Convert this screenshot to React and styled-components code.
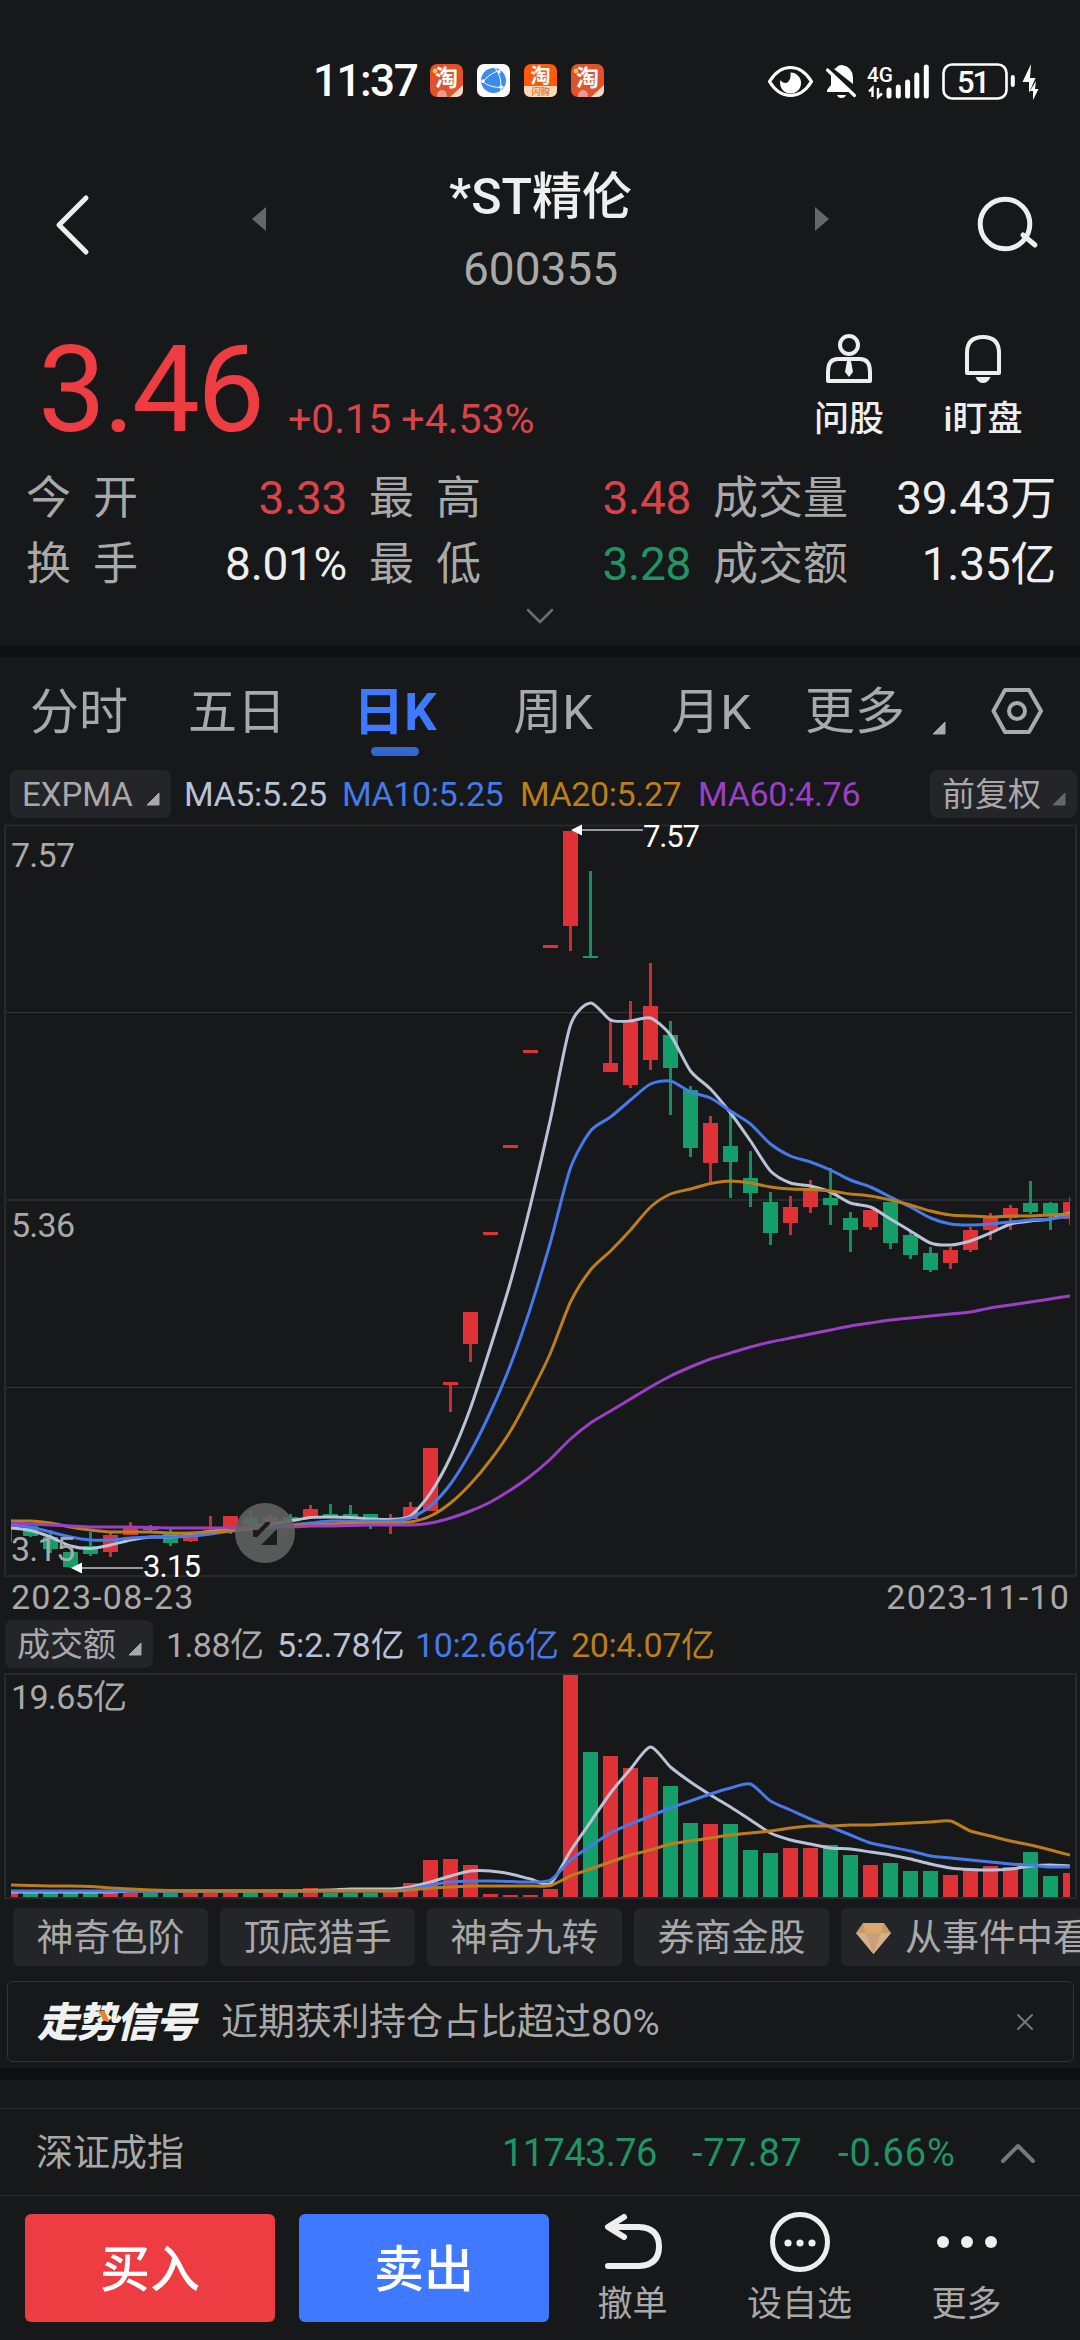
import React from 'react';
import styled, { createGlobalStyle } from 'styled-components';

const RED = '#e03236';
const GREEN = '#149f6a';
const WHITE_LINE = '#b9c2d6';
const BLUE_LINE = '#467aea';
const ORANGE_LINE = '#bb7e1a';
const PURPLE_LINE = '#9d3fc6';

// [color, high, low, bodyTop, bodyBottom], one candle every 20px
const candles = [
  ['r', 1519, 1542, 1526, 1527],
  ['g', 1526, 1537, 1526, 1536],
  ['g', 1530, 1553, 1537, 1549],
  ['g', 1552, 1568, 1552, 1567],
  ['g', 1532, 1556, 1546, 1554],
  ['r', 1533, 1557, 1535, 1552],
  ['r', 1522, 1535, 1527, 1535],
  ['g', 1525, 1531, 1528, 1530],
  ['g', 1529, 1546, 1534, 1543],
  ['r', 1533, 1542, 1535, 1541],
  ['r', 1516, 1532, 1530, 1532],
  ['r', 1516, 1534, 1516, 1531],
  ['g', 1510, 1525, 1517, 1525],
  ['r', 1514, 1522, 1517, 1522],
  ['g', 1514, 1521, 1517, 1520],
  ['r', 1505, 1518, 1509, 1517],
  ['g', 1504, 1517, 1514, 1517],
  ['g', 1505, 1517, 1514, 1517],
  ['g', 1514, 1529, 1514, 1519],
  ['r', 1514, 1534, 1524, 1526],
  ['r', 1502, 1519, 1507, 1519],
  ['r', 1448, 1511, 1448, 1511],
  ['r', 1382, 1412, 1382, 1385],
  ['r', 1312, 1362, 1312, 1344],
  ['r', 1232, 1235, 1232, 1235],
  ['r', 1145, 1148, 1145, 1148],
  ['r', 1050, 1053, 1050, 1053],
  ['r', 945, 948, 945, 948],
  ['r', 831, 951, 831, 926],
  ['g', 871, 957, 956, 958],
  ['r', 1018, 1072, 1063, 1072],
  ['r', 1001, 1088, 1022, 1085],
  ['r', 963, 1070, 1006, 1060],
  ['g', 1021, 1115, 1035, 1068],
  ['g', 1086, 1157, 1090, 1148],
  ['r', 1116, 1183, 1123, 1163],
  ['g', 1113, 1198, 1146, 1162],
  ['g', 1151, 1207, 1178, 1193],
  ['g', 1192, 1245, 1202, 1233],
  ['r', 1196, 1235, 1207, 1223],
  ['r', 1180, 1213, 1189, 1207],
  ['g', 1168, 1225, 1198, 1205],
  ['g', 1212, 1252, 1218, 1230],
  ['r', 1210, 1230, 1210, 1227],
  ['g', 1202, 1249, 1202, 1243],
  ['g', 1230, 1259, 1235, 1255],
  ['g', 1247, 1272, 1253, 1270],
  ['r', 1247, 1269, 1250, 1263],
  ['r', 1227, 1252, 1230, 1250],
  ['r', 1213, 1240, 1217, 1230],
  ['r', 1205, 1230, 1208, 1218],
  ['g', 1181, 1214, 1203, 1212],
  ['g', 1202, 1230, 1203, 1214],
  ['r', 1197, 1225, 1202, 1219],
];

const ma5 = [1528, 1530.5, 1537, 1546, 1548.5, 1545, 1540, 1537, 1537, 1535, 1531.5, 1529, 1527, 1524, 1521, 1517.5, 1517, 1517.5, 1519, 1519.5, 1516, 1493, 1457, 1408, 1347, 1282, 1205, 1119, 1025, 1003, 1020, 1021, 1018, 1035, 1071, 1089, 1113, 1141, 1171, 1183, 1186, 1192, 1203, 1207, 1219, 1231, 1243, 1245, 1241, 1233, 1224, 1221, 1219, 1213];
const ma10 = [1525, 1527, 1532, 1537, 1540, 1540, 1538, 1537, 1537, 1536, 1534, 1531, 1529, 1527, 1525, 1523, 1521, 1521, 1521, 1521, 1518, 1506, 1484, 1452, 1412, 1365, 1308, 1242, 1168, 1131, 1117, 1100, 1084, 1081, 1092, 1098, 1111, 1124, 1144, 1156, 1162, 1170, 1180, 1187, 1197, 1207, 1218, 1224, 1225, 1224, 1222, 1220, 1219, 1216];
const ma20 = [1521, 1521, 1523, 1527, 1530, 1532, 1532, 1532, 1533, 1533, 1532, 1531, 1529, 1527, 1526, 1525, 1524, 1523, 1523, 1523, 1522, 1516, 1503, 1484, 1460, 1431, 1394, 1353, 1302, 1270, 1251, 1230, 1207, 1194, 1189, 1183.5, 1181, 1183, 1187, 1189, 1189.5, 1191, 1194, 1196, 1200, 1205, 1211, 1215, 1216, 1217, 1216, 1216, 1215, 1214];
const ma60 = [1523, 1524, 1525, 1526, 1527, 1527, 1527, 1527.5, 1528, 1528, 1528, 1528, 1527, 1527, 1527, 1526, 1526, 1525.5, 1525, 1525, 1525, 1523, 1518, 1511, 1502, 1490, 1476, 1459, 1439, 1423, 1411, 1399, 1387, 1376, 1367, 1359, 1353, 1347, 1342, 1338, 1334, 1330, 1326, 1323, 1320, 1318, 1316, 1314, 1312, 1308, 1305, 1302, 1299, 1296];

const volumeTops = [1893, 1893, 1893, 1893, 1893, 1893, 1893, 1893, 1893, 1893, 1893, 1893, 1893, 1893, 1892, 1888, 1893, 1893, 1893, 1892, 1883, 1860, 1859, 1865, 1894, 1895, 1895, 1889, 1675, 1752, 1756, 1768, 1777, 1786, 1823, 1824, 1824, 1850, 1853, 1848, 1848, 1845, 1855, 1865, 1863, 1871, 1871, 1875, 1869, 1866, 1867, 1852, 1876, 1873];
const vol5 = [1892, 1892, 1892, 1892, 1892, 1892, 1891, 1891, 1891, 1891, 1891, 1891, 1891, 1891, 1891, 1890.5, 1890, 1889, 1889, 1889, 1887, 1882, 1876, 1871, 1871, 1874, 1879, 1883.5, 1851, 1822, 1793, 1769, 1747, 1767, 1782, 1795, 1807, 1820, 1833, 1840, 1844, 1848, 1849, 1852, 1855, 1859, 1864, 1868, 1869.5, 1870, 1869, 1866, 1865, 1866];
const vol10 = [1891, 1891, 1891, 1891, 1891, 1891, 1891, 1891, 1891, 1891, 1891, 1891, 1891, 1891, 1891, 1891, 1891, 1891, 1891, 1891, 1889, 1885, 1882, 1881, 1881, 1881.5, 1882, 1880, 1860, 1846, 1833, 1824, 1816, 1808, 1801, 1794, 1788, 1784, 1801, 1810, 1819, 1827, 1835, 1843, 1847, 1851, 1856, 1858, 1860, 1862, 1864, 1865, 1867, 1867];
const vol20 = [1885, 1885.5, 1886, 1886, 1886.5, 1888, 1889, 1890, 1890.5, 1891, 1891, 1891, 1891, 1891, 1891, 1891, 1891, 1891, 1891, 1891, 1890, 1888, 1887, 1886, 1886, 1886, 1886, 1885.5, 1876, 1869, 1862, 1855, 1850, 1844, 1841, 1838, 1835, 1833, 1831, 1828, 1826, 1826, 1825, 1825, 1824, 1823, 1822, 1821, 1831, 1836, 1841, 1845, 1850, 1855];

const xAt = (i) => 10.5 + i * 20;

// cubic path through every point with light tension
const linePath = (values) => {
  const p = values.map((y, i) => [xAt(i), y]);
  let d = `M${p[0][0]},${p[0][1]}`;
  for (let i = 0; i < p.length - 1; i++) {
    const a = p[Math.max(i - 1, 0)];
    const b = p[i];
    const c = p[i + 1];
    const e = p[Math.min(i + 2, p.length - 1)];
    const c1y = b[1] + (c[1] - a[1]) / 8;
    const c2y = c[1] - (e[1] - b[1]) / 8;
    d += `C${b[0] + 5},${c1y} ${c[0] - 5},${c2y} ${c[0]},${c[1]}`;
  }
  return d;
};

const fillOf = (c) => (c === 'r' ? RED : GREEN);

const Lines = ({ series }) =>
  series.map(([values, color]) => (
    <path key={color} d={linePath(values)} fill="none" stroke={color} strokeWidth="3" strokeLinejoin="round" />
  ));

const PriceChart = () => (
  <svg width="1080" height="752" viewBox="0 825 1080 752" display="block">
    <defs>
      <clipPath id="plot"><rect x="11" y="800" width="1059" height="1100" /></clipPath>
    </defs>
    <path d="M5 825.5H1076V1576H5Z" fill="none" stroke="#27282b" strokeWidth="2" />
    <path d="M6 1012.5H1073M6 1387.5H1073" stroke="#333436" />
    <path d="M6 1200H1073" stroke="#29292b" strokeWidth="2" />
    <g clipPath="url(#plot)">
      {candles.map(([c, high, low, top, bottom], i) => (
        <g key={i} fill={fillOf(c)}>
          <rect x={xAt(i) - 1.5} y={high} width="3" height={low - high} opacity=".88" />
          <rect x={xAt(i) - 7.5} y={top} width="15" height={bottom - top} />
        </g>
      ))}
      <Lines series={[[ma5, WHITE_LINE], [ma10, BLUE_LINE], [ma20, ORANGE_LINE], [ma60, PURPLE_LINE]]} />
    </g>
    <circle cx="265" cy="1533" r="30" fill="#626262" opacity=".88" />
    <path d="M253 1530V1537H257L270 1524V1522H266L258 1530ZM277 1529V1545H261Z" fill="#1c1c1d" />
    <path d="M576 830H643M76 1568H143" stroke="#999" strokeWidth="2" />
    <path d="M571 830L582 824.5V835.5ZM71 1568L82 1562.5V1573.5Z" fill="#fff" />
    <ChartText x="643" y="847" textLength="57" $white>7.57</ChartText>
    <ChartText x="143" y="1577" textLength="58" $white>3.15</ChartText>
    <ChartText x="11" y="867" textLength="64">7.57</ChartText>
    <ChartText x="11" y="1237" textLength="64">5.36</ChartText>
    <ChartText x="11" y="1561" textLength="64">3.15</ChartText>
  </svg>
);

const VolumeChart = () => (
  <svg width="1080" height="226" viewBox="0 1673 1080 226" display="block">
    <path d="M5 1674H1076V1898H5Z" fill="none" stroke="#27282b" strokeWidth="2" />
    <g clipPath="url(#plot)">
      {volumeTops.map((top, i) => (
        <rect key={i} x={xAt(i) - 7.5} y={top} width="15" height={1897 - top} fill={fillOf(candles[i][0])} />
      ))}
      <Lines series={[[vol5, WHITE_LINE], [vol10, BLUE_LINE], [vol20, ORANGE_LINE]]} />
    </g>
    <ChartText x="11" y="1709" textLength="116">19.65亿</ChartText>
  </svg>
);

const TaobaoIcon = ({ sale }) => (
  <svg width="33" height="33" viewBox="0 0 33 33">
    <rect width="33" height="33" rx="7" fill={sale ? '#fd5a0c' : '#e2502c'} />
    {sale ? (
      <path d="M0 22H33V26Q33 33 26 33H7Q0 33 0 26Z" fill="#fbd9bd" />
    ) : (
      <>
        <path d="M20 33L33 21V26Q33 33 26 33Z" fill="#f4d9c8" />
        <circle cx="5" cy="7" r="2.4" fill="#f7c63c" />
        <path d="M7 33Q7 26 12 26T17 33Z" fill="#eb9b8b" />
      </>
    )}
    <IconText x="16.5" y={sale ? 19 : 21.5} fontSize={sale ? 20 : 23}>淘</IconText>
    {sale && <IconText x="16.5" y="31" fontSize="9" $color="#e8803a">闪购</IconText>}
  </svg>
);

const GlobeIcon = () => (
  <svg width="33" height="33" viewBox="0 0 33 33">
    <rect width="33" height="33" rx="7" fill="#fff" />
    <circle cx="16.5" cy="16.5" r="12.5" fill="#3b8cec" />
    <path d="M18 4Q25 12 24 27M24 6Q12 9 5 19M5 17Q14 25 27 23" fill="none" stroke="#fff" />
    <g fill="#fff">
      <circle cx="6" cy="17" r="1.7" />
      <circle cx="22" cy="8" r="1.6" />
      <circle cx="24" cy="23" r="1.8" />
    </g>
  </svg>
);

const StatusIcons = () => (
  <svg width="272" height="40" viewBox="767 60 272 40">
    <path d="M769.5 80.5Q778 66.5 790.5 66.5T811.5 80.5Q803 94.5 790.5 94.5T769.5 80.5Z" fill="none" stroke="#fff" strokeWidth="3.2" strokeLinejoin="round" />
    <path d="M790.5 71.5A10.5 10.5 0 1 1 780.5 79Q782 82 786 82Q791.5 80 790.5 71.5Z" fill="#fff" />
    <path d="M836 67Q838 64 842 64Q853 66 853 77V83L834 68ZM831 73L851 91H827V89L831 84ZM837 94H846Q845 97 841.5 97T837 94Z" fill="#fff" />
    <path d="M827.5 69L854.5 94.5" stroke="#fff" strokeWidth="3.2" strokeLinecap="round" />
    <text x="867" y="80.5" fontSize="20" fontWeight="500" fill="#fff" textLength="26" lengthAdjust="spacingAndGlyphs">4G</text>
    <path d="M872.5 96V87L869 90.5M878 87V96L882 92.5" fill="none" stroke="#fff" strokeWidth="2.4" />
    <path d="M889 89V95M898.3 86V95M907.6 81V95M916.8 74V95M926.3 66V95" stroke="#fff" strokeWidth="5" strokeLinecap="round" />
    <rect x="943.5" y="63.5" width="63" height="34" rx="8.5" fill="none" stroke="#fff" strokeWidth="2.6" />
    <text x="957" y="91.5" fontSize="31" fontWeight="500" fill="#fff" textLength="33">51</text>
    <path d="M1012.8 76V84" stroke="#fff" strokeWidth="4" strokeLinecap="round" />
    <path d="M1031 63L1022.5 81H1029V92L1035.5 77H1030ZM1036 80L1030 90H1033V99L1038.5 88H1035Z" fill="#fff" />
  </svg>
);

const SearchIcon = () => (
  <svg width="66" height="62" viewBox="975 195 66 62" fill="none" stroke="#eee" strokeWidth="5">
    <circle cx="1005" cy="225" r="24.8" />
    <path d="M1023 236L1035 246" strokeLinecap="round" />
  </svg>
);

const AdvisorIcon = () => (
  <svg width="48" height="50" viewBox="0 0 48 50" fill="none" stroke="#eee" strokeWidth="4">
    <circle cx="24" cy="11" r="9" />
    <path d="M3 47V38Q3 25 13 25H35Q45 25 45 38V47Z" strokeLinejoin="round" />
    <path d="M22 27H26L28 38L24 43L20 38Z" fill="#eee" stroke="none" />
  </svg>
);

const BellIcon = () => (
  <svg width="40" height="50" viewBox="0 0 40 50" fill="none" stroke="#eee" strokeWidth="4">
    <path d="M4 39V19Q4 3 20 3T36 19V39Z" strokeLinejoin="round" />
    <path d="M12.5 43H27.5Q25 49 20 49T12.5 43Z" fill="#eee" stroke="none" />
  </svg>
);

const Corner = ({ color = '#a9a9a9' }) => (
  <svg width="14" height="14" viewBox="0 0 14 14">
    <path d="M13 1V13H1Z" fill={color} stroke={color} strokeLinejoin="round" />
  </svg>
);

const SettingsIcon = () => (
  <svg width="52" height="48" viewBox="0 0 52 48" fill="none" stroke="#aaa" strokeWidth="4">
    <path d="M14 3H38L50 24L38 45H14L2.5 24Z" strokeLinejoin="round" />
    <circle cx="26" cy="24" r="8" />
  </svg>
);

const GemIcon = () => (
  <svg width="35" height="31" viewBox="0 0 35 31">
    <path d="M7 0H28L35 10L17.5 31L0 10Z" fill="#c49a6c" />
    <path d="M7 0H28L25 10H10Z" fill="#dba970" />
    <path d="M0 10H35L17.5 31Z" fill="#d4b08a" />
    <path d="M10 10H25L17.5 31Z" fill="#c9a078" />
  </svg>
);

const UndoIcon = () => (
  <svg width="60" height="56" viewBox="0 0 60 56" fill="none" stroke="#eee" strokeWidth="6" strokeLinecap="round" strokeLinejoin="round">
    <path d="M21 3L5 13L21 23M6 13H36Q56 14 56 32.5T36 52H5" />
  </svg>
);

const WatchIcon = () => (
  <svg width="60" height="60" viewBox="0 0 60 60">
    <circle cx="30" cy="30" r="27.5" fill="none" stroke="#eee" strokeWidth="5" />
    <g fill="#eee">
      <circle cx="18" cy="31" r="3.6" />
      <circle cx="30" cy="31" r="3.6" />
      <circle cx="42" cy="31" r="3.6" />
    </g>
  </svg>
);

const DotsIcon = () => (
  <svg width="60" height="56" viewBox="0 0 60 56" fill="#eee">
    <circle cx="6" cy="28" r="6" />
    <circle cx="30" cy="28" r="6" />
    <circle cx="54" cy="28" r="6" />
  </svg>
);

const Arrow = ({ d, width, height, color, stroke }) => (
  <svg width={width} height={height} fill="none" stroke={color} strokeWidth={stroke} strokeLinecap="round" strokeLinejoin="round">
    <path d={d} />
  </svg>
);

const stats = [
  ['今 开', '3.33', '#d9444a'],
  ['最 高', '3.48', '#d9444a'],
  ['成交量', '39.43万', '#eee'],
  ['换 手', '8.01%', '#eee'],
  ['最 低', '3.28', '#229464'],
  ['成交额', '1.35亿', '#eee'],
];

const tabs = ['分时', '五日', '日K', '周K', '月K'];
const chips = ['神奇色阶', '顶底猎手', '神奇九转', '券商金股'];

const App = () => (
  <Page>
    <GlobalStyle />
    <StatusBar>
      <Clock>11:37</Clock>
      <AppIcons>
        <TaobaoIcon />
        <GlobeIcon />
        <TaobaoIcon sale />
        <TaobaoIcon />
      </AppIcons>
      <StatusIcons />
    </StatusBar>

    <Header>
      <Arrow d="M31 4L4 31L31 58" width={35} height={62} color="#eee" stroke={5} />
      <Triangle />
      <Title>
        <StockName>*ST精伦</StockName>
        <StockCode>600355</StockCode>
      </Title>
      <Triangle $right />
      <SearchIcon />
    </Header>

    <PriceRow>
      <Price>3.46</Price>
      <Change>+0.15 +4.53%</Change>
      <QuickAction><AdvisorIcon />问股</QuickAction>
      <QuickAction><BellIcon />i盯盘</QuickAction>
    </PriceRow>

    <Stats>
      {stats.map(([label, value, color]) => (
        <Stat key={label}>
          <StatLabel>{label.split(' ').map((part) => <span key={part}>{part}</span>)}</StatLabel>
          <StatValue $color={color}>{value}</StatValue>
        </Stat>
      ))}
    </Stats>
    <Expand>
      <Arrow d="M2 2L14 14L26 2" width={28} height={17} color="#6e6e6e" stroke={2.5} />
    </Expand>
    <Band />

    <Tabs>
      {tabs.map((tab) => <Tab key={tab} $active={tab === '日K'}>{tab}</Tab>)}
      <MoreTab>更多<Corner /></MoreTab>
      <SettingsIcon />
    </Tabs>

    <IndicatorRow $height="60px" $bottom="3px">
      <Pill $left="10px" $width="161px">EXPMA<Corner /></Pill>
      <Legend $left="13px" $width="158px" $color={WHITE_LINE} $spacing="-0.4px">MA5:5.25</Legend>
      <Legend $width="178px" $color={BLUE_LINE} $spacing="-0.4px">MA10:5.25</Legend>
      <Legend $width="178px" $color={ORANGE_LINE} $spacing="-0.4px">MA20:5.27</Legend>
      <Legend $width="232px" $color={PURPLE_LINE} $spacing="-0.3px">MA60:4.76</Legend>
      <Pill $width="147px">前复权<Corner color="#666" /></Pill>
    </IndicatorRow>
    <PriceChart />
    <Dates><span>2023-08-23</span><span>2023-11-10</span></Dates>

    <IndicatorRow $height="55px" $bottom="4px">
      <Pill $left="5px" $width="148px">成交额<Corner /></Pill>
      <Legend $left="13px" $width="111px" $color="#a9a9a9" $spacing="-0.6px" $top="3px">1.88亿</Legend>
      <Legend $width="138px" $color={WHITE_LINE} $top="3px">5:2.78亿</Legend>
      <Legend $width="156px" $color={BLUE_LINE} $spacing="-0.4px" $top="3px">10:2.66亿</Legend>
      <Legend $width="150px" $color={ORANGE_LINE} $spacing="-0.4px" $top="3px">20:4.07亿</Legend>
    </IndicatorRow>
    <VolumeChart />

    <Chips>
      {chips.map((chip) => <Chip key={chip}>{chip}</Chip>)}
      <Chip $wide><GemIcon />从事件中看</Chip>
    </Chips>

    <Signal>
      <SignalLogo>走势信号</SignalLogo>
      <SignalText>近期获利持仓占比超过80%</SignalText>
      <Arrow d="M2 2L16 16M16 2L2 16" width={18} height={18} color="#777" stroke={2} />
    </Signal>
    <Band />

    <IndexRow>
      <IndexName>深证成指</IndexName>
      <IndexValue $width="190px" $spacing="-0.6px">11743.76</IndexValue>
      <IndexValue $width="146px" $spacing="0.8px">-77.87</IndexValue>
      <IndexValue $width="162px" $spacing="0.9px">-0.66%</IndexValue>
      <Arrow d="M3 19L18 4L33 19" width={36} height={23} color="#777" stroke={4} />
    </IndexRow>

    <Footer>
      <TradeButton $color="#ed3d42">买入</TradeButton>
      <TradeButton $color="#3f79ff">卖出</TradeButton>
      <FooterAction><UndoIcon />撤单</FooterAction>
      <FooterAction><WatchIcon />设自选</FooterAction>
      <FooterAction><DotsIcon />更多</FooterAction>
    </Footer>
  </Page>
);

export default App;

// Styled components

const GlobalStyle = createGlobalStyle`
  body {
    margin: 0;
    background: #17181a;
  }
`;

const Page = styled.div`
  width: 1080px;
  height: 2340px;
  overflow: hidden;
  background: #17181a;
  color: #a9a9a9;
  font-family: Roboto, 'Noto Sans CJK SC', sans-serif;
  line-height: 1;
  white-space: nowrap;

  svg {
    flex-shrink: 0;
    overflow: visible;
  }
`;

const ChartText = styled.text`
  font-size: ${(props) => (props.$white ? 31 : 34)}px;
  fill: ${(props) => (props.$white ? '#fff' : '#a9a9a9')};
`;

const IconText = styled.text`
  fill: ${(props) => props.$color || '#fff'};
  font-family: 'Noto Sans CJK SC', sans-serif;
  font-weight: 700;
  text-anchor: middle;
`;

const StatusBar = styled.div`
  display: flex;
  align-items: center;
  box-sizing: border-box;
  height: 130px;
  padding: 31px 41px 0 313px;
`;

const Clock = styled.div`
  width: 117px;
  font-size: 44px;
  font-weight: 500;
  letter-spacing: -1.5px;
  color: #fff;
`;

const AppIcons = styled.div`
  display: flex;
  gap: 14px;
  flex: 1;
`;

const Header = styled.div`
  display: flex;
  align-items: center;
  box-sizing: border-box;
  height: 190px;
  padding: 0 39px 0 55px;
`;

const Triangle = styled.div`
  width: 0;
  height: 0;
  margin: ${(props) => (props.$right ? '0 146px 12px 0' : '0 0 12px 162px')};
  border: 12px solid transparent;
  border-${(props) => (props.$right ? 'right' : 'left')}-width: 0;
  border-${(props) => (props.$right ? 'left' : 'right')}: 14px solid #666;
`;

const Title = styled.div`
  display: flex;
  flex-direction: column;
  align-items: center;
  flex: 1;
  gap: 24px;
  padding-top: 13px;
`;

const StockName = styled.div`
  color: #eee;
  font-size: 50px;
  font-weight: 500;
`;

const StockCode = styled.div`
  font-size: 46px;
`;

const PriceRow = styled.div`
  display: flex;
  align-items: flex-end;
  box-sizing: border-box;
  height: 140px;
  padding: 0 51px 20px 38px;
`;

const Price = styled.div`
  width: 250px;
  margin-bottom: -11px;
  color: #ed3d42;
  font-size: 121px;
  letter-spacing: -3px;
`;

const Change = styled.div`
  flex: 1;
  color: #d9444a;
  font-size: 41px;
`;

const QuickAction = styled.div`
  display: flex;
  flex-direction: column;
  align-items: center;
  gap: 18px;
  width: 92px;
  margin: 0 0 3px 42px;
  color: #eee;
  font-size: 35px;
  font-weight: 500;
`;

const Stats = styled.div`
  display: grid;
  grid-template-columns: 321px 322px 343px;
  column-gap: 22px;
  padding: 5px 24px 0 26px;
`;

const Stat = styled.div`
  display: flex;
  align-items: center;
  justify-content: space-between;
  height: 66px;
`;

const StatLabel = styled.div`
  display: flex;
  justify-content: space-between;
  min-width: 112px;
  font-size: 45px;
`;

const StatValue = styled.div`
  color: ${(props) => props.$color};
  font-size: 46px;
  letter-spacing: -0.3px;
`;

const Expand = styled.div`
  display: flex;
  justify-content: center;
  height: 37px;
  padding-top: 11px;
`;

const Band = styled.div`
  height: 12px;
  background: #0f1012;
`;

const Tabs = styled.div`
  display: flex;
  align-items: center;
  box-sizing: border-box;
  height: 108px;
  padding-right: 37px;
  font-size: 49px;
`;

const Tab = styled.div`
  display: flex;
  flex-direction: column;
  align-items: center;
  justify-content: center;
  width: 158px;
  height: 108px;
  padding-top: 2px;
  box-sizing: border-box;
  color: ${(props) => (props.$active ? '#3f79ff' : 'inherit')};
  font-size: ${(props) => (props.$active ? 51 : 49)}px;
  font-weight: ${(props) => (props.$active ? 700 : 400)};

  &::after {
    content: '';
    width: 48px;
    height: 9px;
    margin-top: 9px;
    margin-bottom: -18px;
    border-radius: 5px;
    background: ${(props) => (props.$active ? '#3267cf' : 'transparent')};
  }
`;

const MoreTab = styled.div`
  display: flex;
  align-items: flex-end;
  flex: 1;
  gap: 27px;
  margin-left: 15px;
  padding-top: 2px;
  font-size: 50px;

  svg {
    margin-bottom: 2px;
  }
`;

const IndicatorRow = styled.div`
  display: flex;
  align-items: center;
  box-sizing: border-box;
  height: ${(props) => props.$height};
  padding-bottom: ${(props) => props.$bottom};
  font-size: 33px;
`;

const Pill = styled.div`
  display: flex;
  align-items: center;
  justify-content: space-between;
  flex-shrink: 0;
  box-sizing: border-box;
  width: ${(props) => props.$width};
  height: 48px;
  margin-left: ${(props) => props.$left || 0};
  padding: 2px 11px 0 12px;
  border-radius: 8px;
  background: #242529;

  svg {
    margin-top: 8px;
  }
`;

const Legend = styled.div`
  flex-shrink: 0;
  width: ${(props) => props.$width};
  margin-left: ${(props) => props.$left || 0};
  padding-top: ${(props) => props.$top || 0};
  color: ${(props) => props.$color};
  font-size: 34px;
  letter-spacing: ${(props) => props.$spacing || 0};
`;

const Dates = styled.div`
  display: flex;
  align-items: center;
  justify-content: space-between;
  height: 39px;
  padding: 0 10px 2px 11px;
  font-size: 34px;
  letter-spacing: 1.2px;
`;

const Chips = styled.div`
  display: flex;
  gap: 12px;
  height: 58px;
  padding: 9px 0 15px 13px;
  overflow: hidden;
`;

const Chip = styled.div`
  display: flex;
  align-items: center;
  justify-content: ${(props) => (props.$wide ? 'flex-start' : 'center')};
  flex-shrink: 0;
  gap: 14px;
  box-sizing: border-box;
  width: ${(props) => (props.$wide ? '270px' : '195px')};
  padding-top: 2px;
  padding-left: ${(props) => (props.$wide ? '15px' : 0)};
  border-radius: 6px;
  background: #242529;
  font-size: 37px;
`;

const Signal = styled.div`
  display: flex;
  align-items: center;
  box-sizing: border-box;
  height: 81px;
  margin: 0 6px 6px 7px;
  padding: 0 39px 0 29px;
  border: 1px solid #343538;
  border-radius: 6px;
`;

const SignalLogo = styled.div`
  position: relative;
  width: 184px;
  padding-top: 3px;
  color: #f0f0f0;
  font-size: 41px;
  font-weight: 900;
  font-style: italic;
  letter-spacing: -1.5px;

  &::after {
    content: '';
    position: absolute;
    top: 11px;
    left: 64px;
    width: 6px;
    height: 10px;
    background: #e8862c;
    transform: skewX(25deg);
  }
`;

const SignalText = styled.div`
  flex: 1;
  padding-top: 2px;
  font-size: 37px;
`;

const IndexRow = styled.div`
  display: flex;
  align-items: center;
  box-sizing: border-box;
  height: 88px;
  margin-top: 28px;
  padding: 2px 44px 0 36px;
  border: solid #27282b;
  border-width: 1px 0;
`;

const IndexName = styled.div`
  flex: 1;
  padding-top: 1px;
  font-size: 37px;
`;

const IndexValue = styled.div`
  width: ${(props) => props.$width};
  color: #229464;
  font-size: 38px;
  letter-spacing: ${(props) => props.$spacing};
`;

const Footer = styled.div`
  display: flex;
  padding: 18px 0 0 25px;
`;

const TradeButton = styled.div`
  display: flex;
  align-items: center;
  justify-content: center;
  box-sizing: border-box;
  width: 250px;
  height: 108px;
  padding-top: 3px;
  border-radius: 6px;
  background: ${(props) => props.$color};
  color: #fff;
  font-size: 50px;
  font-weight: 500;

  & + & {
    margin-left: 24px;
  }
`;

const FooterAction = styled.div`
  display: flex;
  flex-direction: column;
  align-items: center;
  justify-content: space-between;
  width: 167px;
  height: 108px;
  font-size: 35px;

  svg[height='60'] {
    margin-top: -2px;
  }
`;
